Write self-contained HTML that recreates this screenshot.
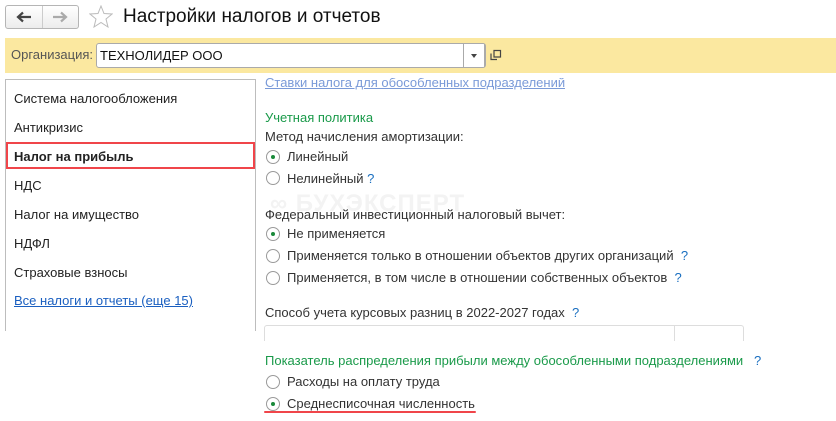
<!DOCTYPE html>
<html><head><meta charset="utf-8"><style>
*{margin:0;padding:0;box-sizing:border-box}
body{width:836px;height:421px;background:#fff;font-family:"Liberation Sans",Arial,sans-serif;font-size:13px;color:#333;position:relative;overflow:hidden}
.a{position:absolute;white-space:nowrap}
.rb{position:absolute;width:14px;height:14px;border:1px solid #9a9a9a;border-radius:50%;background:#fff}
.rb.on::after{content:"";position:absolute;left:4px;top:4px;width:4px;height:4px;border-radius:50%;background:#1a8a3a}
.q{color:#1a6fc0}
.g{color:#1a9a4a}
</style></head><body>
<div class="a" style="left:5px;top:5px;width:74px;height:24px;border:1px solid #b5b5b5;border-radius:3px;background:linear-gradient(#fff,#ececec)"></div>
<div class="a" style="left:42px;top:6px;width:1px;height:22px;background:#ccc"></div>
<svg class="a" style="left:16px;top:11px" width="16" height="12"><path d="M15 6 H3 M7 1.5 L2 6 L7 10.5" fill="none" stroke="#444" stroke-width="2.2"/></svg>
<svg class="a" style="left:52px;top:11px" width="16" height="12"><path d="M1 6 H13 M9 1.5 L14 6 L9 10.5" fill="none" stroke="#aaa" stroke-width="2.2"/></svg>
<svg class="a" style="left:89px;top:5px" width="24" height="23" viewBox="0 0 24 23"><path d="M12 1 L15 8.5 L23 9 L17 14 L19 22 L12 17.5 L5 22 L7 14 L1 9 L9 8.5 Z" fill="none" stroke="#bbb" stroke-width="1"/></svg>
<div class="a" style="left:123px;top:6px;font-size:19px;color:#111">Настройки налогов и отчетов</div>
<div class="a" style="left:5px;top:38px;width:831px;height:35px;background:#fbe8a0"></div>
<div class="a" style="left:11px;top:47px;color:#555">Организация:</div>
<div class="a" style="left:96px;top:43px;width:390px;height:25px;border:1px solid #aaa;border-radius:3px;background:#fff"></div>
<div class="a" style="left:463px;top:44px;width:1px;height:23px;background:#aaa"></div>
<div class="a" style="left:484px;top:44px;width:1px;height:23px;background:#aaa"></div>
<div class="a" style="left:100px;top:48px;color:#111">ТЕХНОЛИДЕР ООО</div>
<div class="a" style="left:471px;top:54px;width:0;height:0;border-left:3px solid transparent;border-right:3px solid transparent;border-top:4px solid #444"></div>
<svg class="a" style="left:490px;top:49px" width="12" height="12"><path d="M1 4.5 V10.5 H7 M4 1.5 H10.5 V8 H4 Z" fill="none" stroke="#444" stroke-width="1.2"/></svg>
<div class="a" style="left:5px;top:79px;width:251px;height:252px;border:1px solid #bdbdbd;border-bottom:none"></div>
<div class="a" style="left:14px;top:91px;color:#222">Система налогообложения</div>
<div class="a" style="left:14px;top:120px;color:#222">Антикризис</div>
<div class="a" style="left:6px;top:142px;width:249px;height:27px;border:2px solid #f0454a"></div>
<div class="a" style="left:14px;top:149px;color:#222;font-weight:bold">Налог на прибыль</div>
<div class="a" style="left:14px;top:178px;color:#222">НДС</div>
<div class="a" style="left:14px;top:207px;color:#222">Налог на имущество</div>
<div class="a" style="left:14px;top:236px;color:#222">НДФЛ</div>
<div class="a" style="left:14px;top:265px;color:#222">Страховые взносы</div>
<div class="a" style="left:14px;top:293px;color:#1a5fc0;text-decoration:underline">Все налоги и отчеты (еще 15)</div>
<div class="a" style="left:265px;top:78px;color:#7a9ad8;text-decoration:underline;height:12px;overflow:hidden;line-height:10px">Ставки налога для обособленных подразделений</div>
<div class="a g" style="left:265px;top:110px">Учетная политика</div>
<div class="a" style="left:265px;top:129px">Метод начисления амортизации:</div>
<div class="rb on" style="left:266px;top:150px"></div><div class="a" style="left:287px;top:149px">Линейный</div>
<div class="rb" style="left:266px;top:171px"></div><div class="a" style="left:287px;top:171px">Нелинейный <span class="q">?</span></div>
<div class="a" style="left:270px;top:190px;font-size:24px;font-weight:bold;color:#f3f3f3;letter-spacing:1px">∞ БУХЭКСПЕРТ</div>
<div class="a" style="left:265px;top:207px">Федеральный инвестиционный налоговый вычет:</div>
<div class="rb on" style="left:266px;top:227px"></div><div class="a" style="left:287px;top:226px">Не применяется</div>
<div class="rb" style="left:266px;top:249px"></div><div class="a" style="left:287px;top:248px">Применяется только в отношении объектов других организаций <span class="q">&nbsp;?</span></div>
<div class="rb" style="left:266px;top:271px"></div><div class="a" style="left:287px;top:270px">Применяется, в том числе в отношении собственных объектов <span class="q">&nbsp;?</span></div>
<div class="a" style="left:265px;top:305px">Способ учета курсовых разниц в 2022-2027 годах <span class="q">&nbsp;?</span></div>
<div class="a" style="left:264px;top:325px;width:480px;height:16px;border:1px solid #ddd;border-bottom:none;border-radius:3px 3px 0 0"></div>
<div class="a" style="left:674px;top:325px;width:1px;height:16px;background:#ddd"></div>
<div class="a g" style="left:265px;top:353px">Показатель распределения прибыли между обособленными подразделениями <span class="q">&nbsp;&nbsp;?</span></div>
<div class="rb" style="left:266px;top:375px"></div><div class="a" style="left:287px;top:374px">Расходы на оплату труда</div>
<div class="rb on" style="left:266px;top:397px"></div><div class="a" style="left:287px;top:396px">Среднесписочная численность</div>
<div class="a" style="left:264px;top:411px;width:212px;height:2px;background:#f0454a;border-radius:1px"></div>
</body></html>
